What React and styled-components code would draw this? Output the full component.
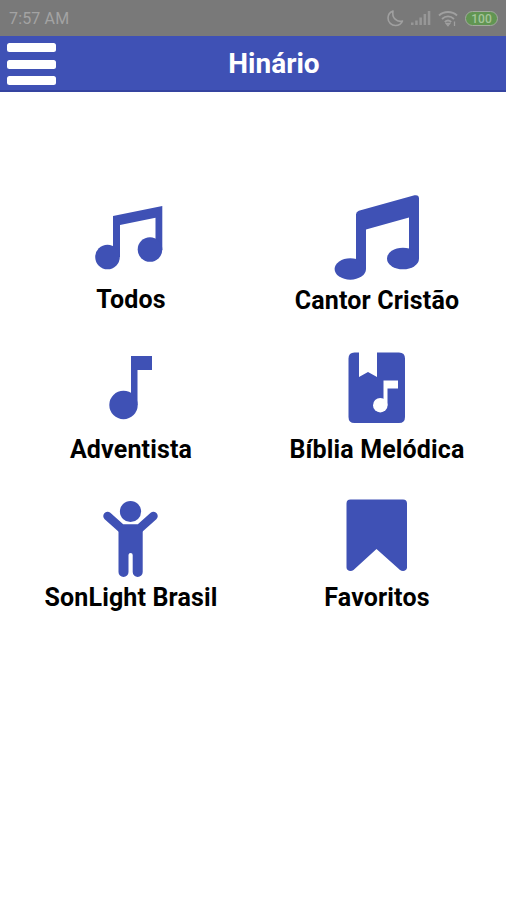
import React from "react";
import styled, { createGlobalStyle } from "styled-components";

const BLUE = "#3f51b5";

const GlobalStyle = createGlobalStyle`
  * { box-sizing: border-box; }
  body { margin: 0; background: #fff; font-family: Roboto, "Liberation Sans", sans-serif; }
`;

const Screen = styled.div`
  display: flex;
  flex-direction: column;
  width: 100%;
  height: 900px;
  overflow: hidden;
  background: #fff;
`;

const StatusBar = styled.div`
  display: flex;
  align-items: center;
  justify-content: space-between;
  height: 36px;
  padding: 0 8px 0 9px;
  background: #797979;
  color: #a3a3a3;
`;

const Clock = styled.span`
  font-size: 16px;
  line-height: 20px;
  letter-spacing: 0.15px;
  padding-top: 2px;
`;

const StatusIcons = styled.div`
  display: flex;
  align-items: center;
  gap: 7px;
`;

const Battery = styled.span`
  display: flex;
  align-items: center;
  justify-content: center;
  width: 33px;
  height: 15px;
  padding-top: 1px;
  border: 1px solid #a3a9a0;
  border-radius: 8px;
  background: #619552;
  color: #a4c49a;
  font-size: 12px;
  font-weight: 500;
  line-height: 12px;
`;

const Header = styled.header`
  display: grid;
  grid-template-columns: 64px 1fr 64px;
  align-items: center;
  height: 56px;
  background: ${BLUE};
  border-bottom: 2px solid #3544a0;
`;

const MenuButton = styled.button`
  display: flex;
  flex-direction: column;
  gap: 7.2px;
  width: 49px;
  margin: 2px 0 0 7.3px;
  padding: 0;
  border: 0;
  background: none;
`;

const MenuBar = styled.span`
  height: 9px;
  border-radius: 2.5px;
  background: #fff;
`;

const Title = styled.h1`
  margin: 0;
  padding: 1px 0 0 42px;
  text-align: center;
  color: #fff;
  font-size: 28px;
  line-height: 32px;
  font-weight: 700;
`;

const Menu = styled.main`
  display: grid;
  grid-template-columns: 246px 246px;
  grid-template-rows: 150px 148px 148px;
  padding: 98px 0 0 8px;
`;

const Tile = styled.a`
  display: flex;
  flex-direction: column;
  align-items: center;
  color: #000;
`;

const Glyph = styled.svg`
  display: block;
  flex: none;
  width: 100px;
  height: 94px;
  fill: ${BLUE};
`;

const Label = styled.span`
  margin-top: ${(p) => p.$gap}px;
  font-size: 25px;
  line-height: 30px;
  font-weight: 700;
  letter-spacing: 0.15px;
  white-space: nowrap;
`;

const tiles = [
  {
    label: "Todos",
    gap: 1,
    box: "81 190 100 94",
    art: (
      <>
        <path d="M113 216L162.3 206V250H155.5V217.7L120 225V257H113Z" />
        <circle cx="107.5" cy="257" r="12.3" />
        <circle cx="150" cy="249.5" r="12.3" />
      </>
    ),
  },
  {
    label: "Cantor Cristão",
    gap: 2,
    box: "327 190 100 94",
    art: (
      <>
        <path d="M356 214.5Q356 211.8 358.8 210.8L414.5 195.3Q419 194.5 419 198.5V258.5H409V217.5L366 229.5V269H356Z" />
        <ellipse cx="350.3" cy="269" rx="15.7" ry="10.7" />
        <ellipse cx="403" cy="258.5" rx="16" ry="10.8" />
      </>
    ),
  },
  {
    label: "Adventista",
    gap: 1,
    box: "81 340 100 94",
    art: (
      <>
        <path d="M131 356H152V370H137.5V405H131Z" />
        <circle cx="123.5" cy="405" r="14.2" />
      </>
    ),
  },
  {
    label: "Bíblia Melódica",
    gap: 1,
    box: "327 340 100 94",
    art: (
      <>
        <path d="M354.5 352.5H359V377L368 372L377 377V352.5H399Q405 352.5 405 358.5V417Q405 423 399 423H354.5Q348.5 423 348.5 417V358.5Q348.5 352.5 354.5 352.5Z" />
        <g fill="#fff">
          <path d="M383.5 380.5H398V388.5H387.5V405H383.5Z" />
          <circle cx="380.3" cy="405.2" r="7.3" />
        </g>
      </>
    ),
  },
  {
    label: "SonLight Brasil",
    gap: 1,
    box: "81 488 100 94",
    art: (
      <>
        <circle cx="130.5" cy="511.5" r="10.6" />
        <path
          d="M107.5 516L121.5 528.5H139.5L153.5 516"
          fill="none"
          stroke={BLUE}
          strokeWidth="8.5"
          strokeLinecap="round"
          strokeLinejoin="round"
        />
        <path d="M118.5 527H142.7V572A5 5 0 0 1 132.7 572V555Q132.7 553 130.6 553Q128.5 553 128.5 555V572A5 5 0 0 1 118.5 572Z" />
      </>
    ),
  },
  {
    label: "Favoritos",
    gap: 1,
    box: "327 488 100 94",
    art: (
      <path d="M350.5 499.5H403Q407 499.5 407 503.5V567.5C407 571 402.5 572 400 570L376.5 549L353.5 570C351 572 346.5 571 346.5 567.5V503.5Q346.5 499.5 350.5 499.5Z" />
    ),
  },
];

export default function App() {
  return (
    <Screen>
      <GlobalStyle />
      <StatusBar>
        <Clock>7:57 AM</Clock>
        <StatusIcons>
          <svg width="17" height="18" viewBox="0 0 17 18" fill="none" stroke="#a0a0a0" strokeWidth="1.6">
            <path d="M6 2C2.5 3.5 1 6 1 9C1 13.5 4.5 16.5 8.5 16.5C12 16.5 14.5 14.5 15.5 12C10 13.5 4.5 9 6 2Z" strokeLinejoin="round" />
          </svg>
          <svg width="20" height="16" viewBox="0 0 20 16" fill="#979797">
            <path d="M0 12.5h2.5V15H0zM4.2 10.5h2.5V15H4.2zM8.4 7.5h2.5V15H8.4zM12.6 4h2.5v11h-2.5zM16.8 1h2.5v14h-2.5z" />
          </svg>
          <svg width="20" height="17" viewBox="0 0 20 17" fill="none" stroke="#a0a0a0" strokeWidth="1.8">
            <path d="M1 5.5C6 .8 14 .8 19 5.5M4 9C7.5 5.6 12.5 5.6 16 9M6.8 12C8.8 10.2 11.2 10.2 13.2 12" />
            <path d="M8.2 13.5L10 15.8L11.8 13.5ZM16.5 11.5V16" strokeWidth="1.3" />
          </svg>
          <Battery>100</Battery>
        </StatusIcons>
      </StatusBar>
      <Header>
        <MenuButton aria-label="Menu">
          <MenuBar />
          <MenuBar />
          <MenuBar />
        </MenuButton>
        <Title>Hinário</Title>
      </Header>
      <Menu>
        {tiles.map((t) => (
          <Tile key={t.label}>
            <Glyph viewBox={t.box} aria-hidden="true">
              {t.art}
            </Glyph>
            <Label $gap={t.gap}>{t.label}</Label>
          </Tile>
        ))}
      </Menu>
    </Screen>
  );
}
